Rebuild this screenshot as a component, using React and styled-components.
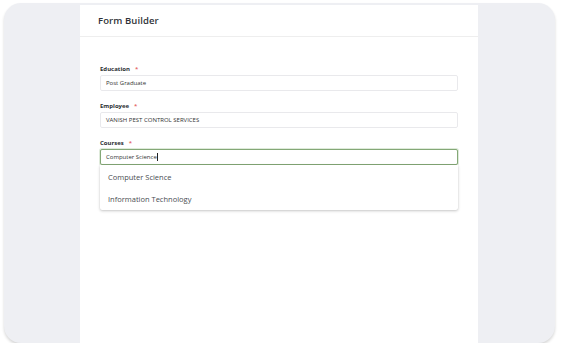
import React from "react";
import styled, { createGlobalStyle } from "styled-components";

const Global = createGlobalStyle`
  html, body { margin: 0; padding: 0; background: #ffffff; }
  body { font-family: "Open Sans", "Noto Sans", sans-serif; }
  * { box-sizing: border-box; }
`;

const Frame = styled.div`
  margin: 3px 0 0 4px;
  width: 551px;
  height: 340px;
  border-radius: 17px;
  background: #eeeff3;
  box-shadow: 0 2px 3px rgba(0, 0, 0, 0.16);
  overflow: hidden;
  display: flex;
`;

const Card = styled.div`
  margin: 2px 0 0 76px;
  width: 398px;
  background: #ffffff;
  display: flex;
  flex-direction: column;
`;

const Header = styled.div`
  height: 32px;
  padding-left: 18px;
  display: flex;
  align-items: center;
  border-bottom: 1px solid #eeeeee;
  font-size: 9.5px;
  font-weight: 600;
  color: #2f3338;
  letter-spacing: 0.1px;
`;

const Body = styled.div`
  padding: 28px 20px 0 20px;
  display: flex;
  flex-direction: column;
`;

const Field = styled.div`
  position: relative;
  display: flex;
  flex-direction: column;
  gap: 2px;
  margin-bottom: 11px;
`;

const Label = styled.div`
  height: 8px;
  line-height: 8px;
  font-size: 6px;
  font-weight: 700;
  color: #2b2f33;
`;

const Req = styled.span`
  color: #e25555;
  margin-left: 5px;
  font-weight: 600;
`;

const Input = styled.div`
  height: 16px;
  border: 1px solid ${(p) => (p.$focused ? "#84a877" : "#e9e9ec")};
  box-shadow: ${(p) => (p.$focused ? "0 0 0 1px rgba(160,195,150,0.35)" : "none")};
  border-radius: 2px;
  padding-left: 5px;
  display: flex;
  align-items: center;
  font-size: 6px;
  color: #333;
  background: #fff;
`;

const Caret = styled.span`
  display: inline-block;
  width: 0.8px;
  height: 8px;
  background: #222;
  margin-left: 0.5px;
`;

const Menu = styled.div`
  position: absolute;
  top: 100%;
  left: 0;
  right: 0;
  background: #fff;
  padding-top: 1px;
  border-radius: 0 0 2px 2px;
  box-shadow: 0 1px 3px rgba(0, 0, 0, 0.22), 0 0 1px rgba(0, 0, 0, 0.12);
`;

const Option = styled.div`
  height: 22px;
  padding-left: 8px;
  display: flex;
  align-items: center;
  font-size: 7.5px;
  color: #4a4d52;
`;

const fields = [
  { label: "Education", value: "Post Graduate" },
  { label: "Employee", value: "VANISH PEST CONTROL SERVICES" },
];

export default function App() {
  return (
    <>
      <Global />
      <Frame>
        <Card>
          <Header>Form Builder</Header>
          <Body>
            {fields.map((f) => (
              <Field key={f.label}>
                <Label>
                  {f.label}
                  <Req>*</Req>
                </Label>
                <Input>{f.value}</Input>
              </Field>
            ))}
            <Field>
              <Label>
                Courses
                <Req>*</Req>
              </Label>
              <Input $focused>
                Computer Science
                <Caret />
              </Input>
              <Menu>
                <Option>Computer Science</Option>
                <Option>Information Technology</Option>
              </Menu>
            </Field>
          </Body>
        </Card>
      </Frame>
    </>
  );
}
